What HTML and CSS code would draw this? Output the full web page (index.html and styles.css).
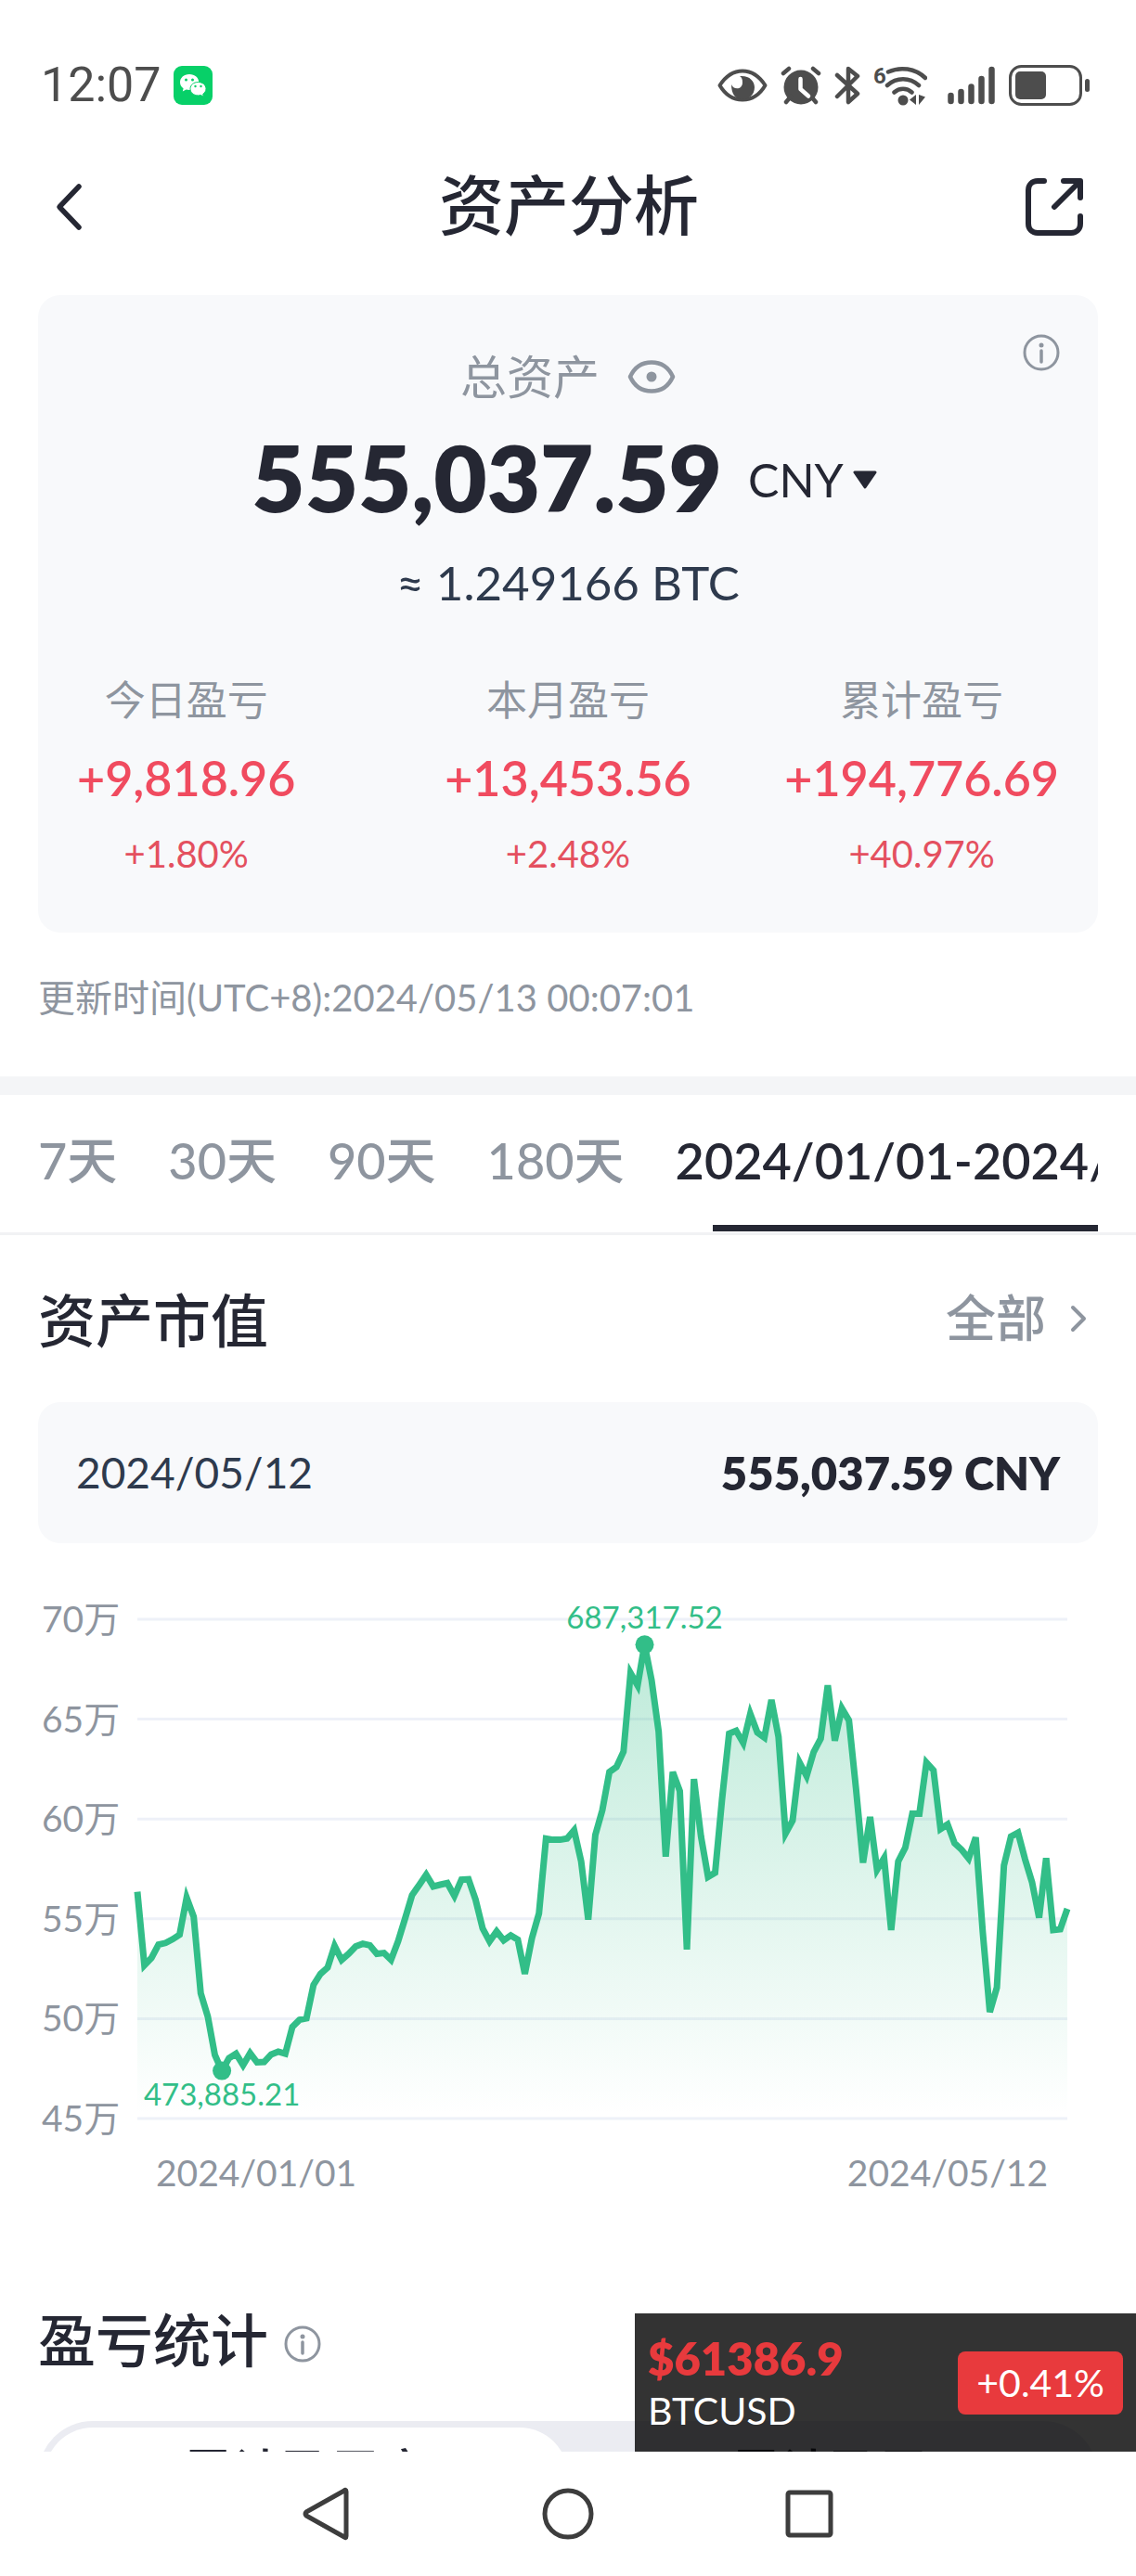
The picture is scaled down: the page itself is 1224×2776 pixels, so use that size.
FILE: index.html
```html
<!DOCTYPE html>
<html lang="zh-CN">
<head>
    <meta charset="UTF-8">
    <meta name="viewport" content="width=device-width, initial-scale=1.0">
    <title>资产分析</title>
    <link rel="stylesheet" href="styles.css">
</head>
<body>
    <div class="app">
        <div class="screen">
            <!-- Status bar -->
            <div class="status-bar">
                <div class="status-left">
                    <span class="clock">12:07</span>
                    <svg class="wechat" width="42" height="42" viewBox="0 0 42 42">
                        <rect width="42" height="42" rx="9" fill="#07d068"/>
                        <path d="M17 9c-6 0-10 4-10 8.700c0 2.800 1.400 5 3.600 6.500l-.8 3.200 3.800-1.800c1.200.3 2.300.4 3.600.4 5.800 0 10-3.800 10-8.400S23 9 17 9z" fill="#fff"/>
                        <path d="M26.500 17.500c-5 0-8.500 3.200-8.500 7.200s3.600 7.200 8.500 7.200c1 0 1.900-.1 2.800-.4l3.200 1.700-.8-2.800c2-1.300 3.300-3.400 3.300-5.700 0-4-3.600-7.200-8.500-7.200z" fill="#fff" stroke="#07d068"/>
                        <circle cx="13.500" cy="15" r="1.500" fill="#07d068"/>
                        <circle cx="20.500" cy="15" r="1.500" fill="#07d068"/>
                        <circle cx="23.500" cy="22" r="1.200" fill="#07d068"/>
                        <circle cx="29.500" cy="22" r="1.200" fill="#07d068"/>
                    </svg>
                </div>
                <div class="status-right">
                    <svg width="54" height="44" viewBox="0 0 54 44">
                        <path d="M2.500 22C9 12 17 6.500 27 6.500S45 12 51.500 22C45 33 37 37.500 27 37.500S9 33 2.500 22z" fill="none" stroke="#4d4d4d" stroke-width="4" stroke-linejoin="round"/>
                        <path d="M24 12c10-1 16 5 16 12 0 8-6 13-13 13s-12-5-12-16c2 6 12 6 12-2 0-4-1-6-3-7z" fill="#4d4d4d"/>
                    </svg>
                    <svg width="44" height="44" viewBox="0 0 44 44">
                        <circle cx="22" cy="24" r="18.500" fill="#4d4d4d"/>
                        <path d="M3 9l6-5M41 9l-6-5M6 40l5-6M38 40l-5-6" stroke="#4d4d4d" stroke-width="4.500" stroke-linecap="round"/>
                        <path d="M21.500 15v11l8.500 7.500" fill="none" stroke="#fff" stroke-width="4.500" stroke-linecap="round" stroke-linejoin="round"/>
                    </svg>
                    <svg width="28" height="44" viewBox="0 0 28 44">
                        <path d="M3 11l22 20-10 9V4l10 8L3 34" fill="none" stroke="#4d4d4d" stroke-width="4.500" stroke-linecap="round" stroke-linejoin="round"/>
                    </svg>
                    <svg class="wifi" width="58" height="46" viewBox="0 0 58 46">
                        <text x="0" y="21" class="wifi-gen">6</text>
                        <path d="M16 8.500c13-6 29-4 40 6.500M15 23c10-9 24-9 34 0M22.500 30.500c5.500-5 13.500-5 19 0" fill="none" stroke="#4d4d4d" stroke-width="4.500" stroke-linecap="round"/>
                        <circle cx="32" cy="39" r="5.500" fill="#4d4d4d"/>
                        <path d="M46 33v11l-7-5.500zM49 33v11l7-8.500z" fill="#4d4d4d"/>
                    </svg>
                    <svg class="signal" width="52" height="44" viewBox="0 0 52 44">
                        <path d="M3.500 33v6M14.500 29v10M25.500 23.500V39M36.500 15v24M47.500 5v34" stroke="#4d4d4d" stroke-width="6.500" stroke-linecap="round"/>
                    </svg>
                    <svg class="battery" width="88" height="46" viewBox="0 0 88 46">
                        <rect x="1.500" y="2.500" width="76" height="41" rx="12" fill="none" stroke="#4d4d4d" stroke-width="3"/>
                        <rect x="7" y="8" width="33" height="30" rx="5" fill="#4d4d4d"/>
                        <rect x="82" y="16" width="5" height="14" rx="2.500" fill="#4d4d4d"/>
                    </svg>
                </div>
            </div>

            <!-- Page header -->
            <header class="page-header">
                <button class="icon-btn" aria-label="返回">
                    <svg width="30" height="52" viewBox="0 0 30 52">
                        <path d="M26 4L5 26l21 22" fill="none" stroke="#252733" stroke-width="5.500" stroke-linecap="round" stroke-linejoin="round"/>
                    </svg>
                </button>
                <h1>资产分析</h1>
                <button class="icon-btn" aria-label="分享">
                    <svg width="62" height="62" viewBox="0 0 62 62">
                        <path d="M20 3h-7C7 3 3 7 3 13v36c0 6 4 10 10 10h36c6 0 10-4 10-10v-8M41 3h18v18M58 4L31 31" fill="none" stroke="#252733" stroke-width="6" stroke-linecap="round" stroke-linejoin="round"/>
                    </svg>
                </button>
            </header>

            <!-- Total assets -->
            <section class="card summary">
                <button class="icon-btn info-corner" aria-label="说明">
                    <svg width="40" height="40" viewBox="0 0 40 40">
                        <circle cx="20" cy="20" r="18" fill="none" stroke="#8e959f" stroke-width="3"/>
                        <circle cx="20" cy="12" r="2.500" fill="#8e959f"/>
                        <path d="M20 18v12" stroke="#8e959f" stroke-width="3.500" stroke-linecap="round"/>
                    </svg>
                </button>
                <div class="total-label">
                    <span>总资产</span>
                    <button class="icon-btn" aria-label="隐藏金额">
                        <svg width="52" height="38" viewBox="0 0 52 38">
                            <path d="M3 19C8 8 16 3.500 26 3.500S44 8 49 19C44 30 36 34.500 26 34.500S8 30 3 19z" fill="none" stroke="#8e959f" stroke-width="4.500" stroke-linejoin="round"/>
                            <circle cx="26" cy="19" r="5.500" fill="#8e959f"/>
                        </svg>
                    </button>
                </div>
                <div class="total-amount">
                    <strong>555,037.59</strong>
                    <button class="currency">CNY
                        <svg width="26" height="20" viewBox="0 0 26 20">
                            <path d="M2 2h22L13 18z" fill="#252733" stroke="#252733" stroke-width="3" stroke-linejoin="round"/>
                        </svg>
                    </button>
                </div>
                <div class="total-btc">≈ 1.249166 BTC</div>
                <div class="profits">
                    <div class="profit">
                        <div class="profit-label">今日盈亏</div>
                        <div class="profit-value">+9,818.96</div>
                        <div class="profit-rate">+1.80%</div>
                    </div>
                    <div class="profit">
                        <div class="profit-label">本月盈亏</div>
                        <div class="profit-value">+13,453.56</div>
                        <div class="profit-rate">+2.48%</div>
                    </div>
                    <div class="profit">
                        <div class="profit-label">累计盈亏</div>
                        <div class="profit-value">+194,776.69</div>
                        <div class="profit-rate">+40.97%</div>
                    </div>
                </div>
            </section>
            <p class="updated">更新时间(UTC+8):2024/05/13 00:07:01</p>

            <!-- Period tabs -->
            <nav class="tabs">
                <div class="tabs-scroll">
                    <button class="tab">7天</button>
                    <button class="tab">30天</button>
                    <button class="tab">90天</button>
                    <button class="tab">180天</button>
                    <button class="tab active">2024/01/01-2024/05/12</button>
                </div>
            </nav>

            <!-- Market value -->
            <section class="market">
                <div class="section-head">
                    <h2>资产市值</h2>
                    <a class="more" href="#">全部
                        <svg width="18" height="30" viewBox="0 0 18 30">
                            <path d="M3 3l12 12L3 27" fill="none" stroke="#8e959f" stroke-width="4" stroke-linecap="round" stroke-linejoin="round"/>
                        </svg>
                    </a>
                </div>
                <div class="card day-value">
                    <span>2024/05/12</span>
                    <strong>555,037.59 CNY</strong>
                </div>
                <svg class="chart" id="chart" viewBox="0 0 1142 680">
                    <defs>
                        <linearGradient id="areaFill" gradientUnits="userSpaceOnUse" x1="0" y1="70" x2="0" y2="575">
                            <stop offset="0" stop-color="#32be88" stop-opacity="0.32"/>
                            <stop offset="1" stop-color="#32be88" stop-opacity="0"/>
                        </linearGradient>
                    </defs>
                    <g id="grid"></g>
                    <path id="area" fill="url(#areaFill)"/>
                    <polyline id="line" class="chart-line"/>
                    <g id="marks"></g>
                    <text class="axis" x="127" y="653">2024/01/01</text>
                    <text class="axis" x="1088" y="653" text-anchor="end">2024/05/12</text>
                </svg>
            </section>

            <!-- Profit statistics -->
            <section class="stats">
                <div class="section-head">
                    <h2>盈亏统计</h2>
                    <button class="icon-btn" aria-label="说明">
                        <svg width="40" height="40" viewBox="0 0 40 40">
                            <circle cx="20" cy="20" r="18" fill="none" stroke="#8e959f" stroke-width="3"/>
                            <circle cx="20" cy="12" r="2.500" fill="#8e959f"/>
                            <path d="M20 18v12" stroke="#8e959f" stroke-width="3.500" stroke-linecap="round"/>
                        </svg>
                    </button>
                </div>
                <div class="segment">
                    <button class="active">累计盈亏率</button>
                    <button>累计盈亏</button>
                </div>
            </section>

            <!-- Floating price widget -->
            <aside class="ticker">
                <div>
                    <div class="ticker-price">$61386.9</div>
                    <div class="ticker-pair">BTCUSD</div>
                </div>
                <span class="ticker-change">+0.41%</span>
            </aside>
        </div>

        <!-- System navigation -->
        <nav class="system-nav">
            <button class="icon-btn" aria-label="后退">
                <svg width="56" height="60" viewBox="0 0 56 60">
                    <path d="M49 6v48c0 2-1 2-2 1L6 32q-2-2 0-4L47 5c1-1 2-1 2 1z" fill="none" stroke="#3d3d3d" stroke-width="5" stroke-linejoin="round"/>
                </svg>
            </button>
            <button class="icon-btn" aria-label="主页">
                <svg width="56" height="60" viewBox="0 0 56 60">
                    <circle cx="28" cy="30" r="25" fill="none" stroke="#3d3d3d" stroke-width="5"/>
                </svg>
            </button>
            <button class="icon-btn" aria-label="最近任务">
                <svg width="56" height="60" viewBox="0 0 56 60">
                    <rect x="5" y="7" width="46" height="46" rx="2" fill="none" stroke="#3d3d3d" stroke-width="5"/>
                </svg>
            </button>
        </nav>
    </div>
    <script src="chart.js"></script>
</body>
</html>
```
FILE: styles.css
```css
* {
    box-sizing: border-box;
}

body {
    margin: 0;
    background: #fff;
    color: #252733;
    font-family: Lato, "Noto Sans CJK SC", sans-serif;
}

h1, h2, p {
    margin: 0;
    font-weight: 500;
}

button {
    padding: 0;
    border: 0;
    background: none;
    color: inherit;
    font: inherit;
}

svg {
    display: block;
    flex: none;
}

.app {
    display: flex;
    flex-direction: column;
    height: 100vh;
}

.screen {
    position: relative;
    flex: 1;
    min-height: 0;
    overflow: hidden;
}

/* Status bar */
.status-bar {
    display: flex;
    align-items: center;
    justify-content: space-between;
    height: 116px;
    padding: 68px 49px 0 44px;
}

.status-left,
.status-right {
    display: flex;
    align-items: center;
}

.status-left {
    gap: 13px;
}

.status-right {
    gap: 14px;
}

.clock {
    color: #4d4d4d;
    font: 52px/48px Roboto, sans-serif;
}

.wifi-gen {
    fill: #4d4d4d;
    font: bold 24px Roboto, sans-serif;
}

.signal {
    margin-left: 8px;
}

/* Header */
.page-header {
    display: flex;
    align-items: center;
    justify-content: space-between;
    height: 202px;
    padding: 12px 57px 0 59px;
}

.page-header .icon-btn {
    display: flex;
    width: 62px;
}

.page-header .icon-btn:last-child {
    justify-content: flex-end;
}

h1 {
    padding-bottom: 4px;
    font-size: 70px;
    line-height: 80px;
}

/* Cards */
.card {
    margin: 0 41px;
    border-radius: 24px;
    background: #f8f9fb;
}

.summary {
    position: relative;
    padding: 58px 42px 61px;
    text-align: center;
}

.info-corner {
    position: absolute;
    top: 42px;
    right: 41px;
}

.total-label {
    display: flex;
    align-items: center;
    justify-content: center;
    gap: 30px;
    color: #8e959f;
    font-size: 50px;
    line-height: 60px;
}

.total-amount {
    display: flex;
    align-items: center;
    justify-content: center;
    gap: 28px;
    margin-top: 18px;
    padding-right: 8px;
}

.total-amount strong {
    font-size: 99px;
    font-weight: 800;
    line-height: 120px;
}

.currency {
    display: flex;
    align-items: center;
    gap: 10px;
    padding-top: 6px;
    font-size: 50px;
    line-height: 60px;
}

.total-btc {
    margin-top: 24px;
    color: #2e3a4d;
    font-size: 51px;
    line-height: 60px;
}

.profits {
    display: grid;
    grid-template-columns: 1fr auto 1fr;
    margin-top: 70px;
}

.profit:first-child {
    justify-self: start;
}

.profit:last-child {
    justify-self: end;
}

.profit-label {
    color: #8e959f;
    font-size: 44px;
    line-height: 52px;
}

.profit-value {
    margin-top: 28px;
    color: #f04b5f;
    font-size: 52px;
    font-weight: 600;
    line-height: 60px;
}

.profit-rate {
    margin-top: 28px;
    color: #e4505f;
    font-size: 40px;
    line-height: 48px;
}

.updated {
    margin: 46px 41px 61px;
    color: #8e959f;
    font-size: 40px;
    font-weight: 400;
    line-height: 48px;
}

/* Tabs */
.tabs {
    padding: 0 41px;
    border-top: 20px solid #f4f5f7;
    border-bottom: 3px solid #f1f2f4;
}

.tabs-scroll {
    display: flex;
    gap: 55px;
    overflow: hidden;
}

.tab {
    position: relative;
    flex: none;
    height: 148px;
    padding-bottom: 6px;
    color: #8e959f;
    font-size: 54px;
    font-weight: 500;
    line-height: 142px;
    white-space: nowrap;
}

.tab.active {
    color: #252733;
    font-weight: 600;
}

.tab.active::after {
    content: "";
    position: absolute;
    right: 0;
    bottom: 1px;
    left: 40px;
    height: 7px;
    background: #252733;
}

/* Market value */
.section-head {
    display: flex;
    align-items: center;
    justify-content: space-between;
    padding: 0 53px 0 41px;
}

h2 {
    font-size: 62px;
    line-height: 76px;
}

.market .section-head {
    padding-top: 54px;
}

.more {
    display: flex;
    align-items: center;
    gap: 26px;
    padding-bottom: 4px;
    color: #8e959f;
    font-size: 54px;
    font-weight: 500;
    line-height: 64px;
    text-decoration: none;
}

.day-value {
    display: flex;
    justify-content: space-between;
    margin-top: 50px;
    padding: 40px 41px;
    font-size: 48px;
    line-height: 72px;
}

.day-value span {
    color: #2e3a4d;
    font-size: 46px;
}

.day-value strong {
    font-size: 49px;
    font-weight: 800;
}

.chart {
    width: calc(100% - 82px);
    margin: 40px 41px 0;
}

.axis {
    fill: #8e959f;
    font-size: 39px;
}

.grid-line {
    stroke: #eef1f8;
    stroke-width: 3;
}

.chart-line {
    fill: none;
    stroke: #32be88;
    stroke-width: 7;
}

.mark {
    fill: #32be88;
    font-size: 33px;
}

/* Statistics */
.stats {
    margin-top: 101px;
}

.stats .section-head {
    justify-content: flex-start;
    gap: 17px;
}

.stats .icon-btn {
    padding-top: 8px;
}

.segment {
    display: flex;
    margin: 49px 41px 0;
    padding: 7px;
    border-radius: 60px;
    background: #ebecf2;
}

.segment button {
    flex: 1;
    height: 104px;
    border-radius: 52px;
    font-size: 53px;
    font-weight: 500;
    line-height: 96px;
    padding-bottom: 8px;
}

.segment .active {
    background: #fff;
}

/* Price widget */
.ticker {
    position: absolute;
    right: 0;
    bottom: 0;
    display: flex;
    align-items: center;
    justify-content: space-between;
    width: 540px;
    height: 149px;
    padding: 0 14px;
    background: rgba(0, 0, 0, 0.8);
    color: #fff;
}

.ticker-price {
    color: #e83a3d;
    font-size: 49px;
    font-weight: 800;
    line-height: 60px;
}

.ticker-pair {
    font-size: 41px;
    line-height: 54px;
}

.ticker-change {
    padding: 0 20px;
    border-radius: 8px;
    background: #e83a3d;
    font-size: 41px;
    line-height: 68px;
}

/* System navigation */
.system-nav {
    display: flex;
    align-items: center;
    justify-content: center;
    gap: 204px;
    height: 134px;
    background: #fff;
}
```
FILE: chart.js
```js
// Daily asset value, in thousand CNY, 2024/01/01 - 2024/05/12
var values = [
    563.5, 526.7, 530.4, 537.1, 537.9, 539.8, 542.1, 560.6, 551.0, 512.7, 501.0, 481.9,
    473.9, 480.2, 482.5, 476.7, 482.7, 478.1, 478.3, 482.1, 483.5, 482.5, 495.8, 499.4,
    500.2, 516.9, 522.5, 525.6, 536.5, 529.4, 532.5, 536.2, 537.5, 536.7, 532.5, 532.9,
    529.4, 538.7, 550.2, 561.9, 566.9, 572.1, 566.2, 567.1, 567.9, 561.5, 569.6, 569.8,
    559.6, 545.2, 538.7, 543.7, 539.2, 541.7, 539.6, 522.5, 540.2, 552.7, 590.2, 589.6,
    589.6, 590.2, 594.4, 578.7, 549.6, 591.9, 604.4, 623.5, 626.0, 633.7, 673.1, 666.9,
    687.3, 669.4, 643.7, 581.2, 623.5, 614.0, 534.6, 620.0, 591.2, 571.0, 573.1, 610.0,
    642.7, 644.2, 638.1, 652.7, 643.3, 640.8, 659.6, 641.2, 592.7, 599.2, 628.3, 621.5,
    633.5, 640.2, 666.9, 639.2, 655.4, 649.4, 615.2, 578.1, 601.0, 574.6, 580.4, 544.4,
    578.7, 585.6, 602.7, 602.7, 628.3, 624.4, 595.0, 597.3, 587.9, 584.6, 580.2, 590.8,
    543.3, 503.3, 515.6, 576.7, 591.2, 593.1, 579.8, 568.3, 550.6, 580.4, 544.4, 544.8,
    555.0
];

var plot = { left: 107, right: 1109, top: 42, bottom: 580 };
var max = 700;
var min = 450;

function x(i) {
    return plot.left + (plot.right - plot.left) * i / (values.length - 1);
}

function y(v) {
    return plot.top + (plot.bottom - plot.top) * (max - v) / (max - min);
}

// Grid lines and axis labels
var grid = "";
for (var v = max; v >= min; v -= 50) {
    grid += '<line class="grid-line" x1="' + plot.left + '" x2="' + plot.right + '" y1="' + y(v) + '" y2="' + y(v) + '"/>';
    grid += '<text class="axis" x="4" y="' + (y(v) + 14) + '">' + v / 10 + '万</text>';
}
document.getElementById("grid").innerHTML = grid;

// Line and the area under it
var points = values.map(function (value, i) {
    return x(i).toFixed(1) + "," + y(value).toFixed(1);
});
document.getElementById("line").setAttribute("points", points.join(" "));
document.getElementById("area").setAttribute("d",
    "M" + plot.left + "," + plot.bottom + " L" + points.join(" L") + " L" + plot.right + "," + plot.bottom + " Z");

// Highest and lowest day
function mark(i, label, dy) {
    return '<circle class="mark" cx="' + x(i) + '" cy="' + y(values[i]) + '" r="10"/>' +
        '<text class="mark" text-anchor="middle" x="' + x(i) + '" y="' + (y(values[i]) + dy) + '">' + label + '</text>';
}
document.getElementById("marks").innerHTML =
    mark(values.indexOf(Math.max.apply(null, values)), "687,317.52", -17) +
    mark(values.indexOf(Math.min.apply(null, values)), "473,885.21", 37);
```
